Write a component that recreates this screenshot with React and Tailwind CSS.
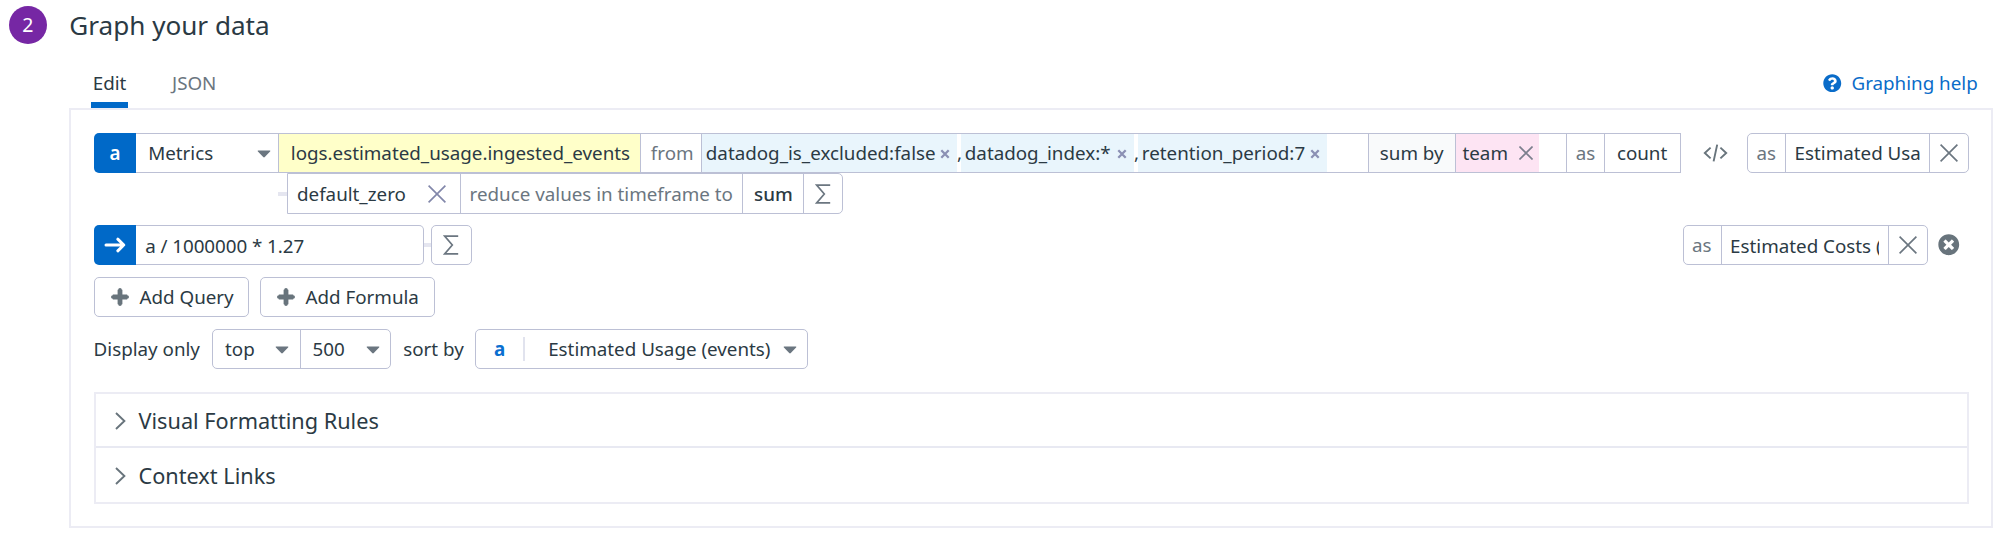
import { FaQuestionCircle, FaTimesCircle } from "react-icons/fa";

function Caret({ className }) {
  return (
    <svg className={`shrink-0 ${className || ""}`} width="14" height="8" viewBox="0 0 14 8">
      <path d="M1.3 .6h11.4c.6 0 .8.6.4 1L7.8 7c-.5.5-1.1.5-1.6 0L.9 1.6C.5 1.2.7.6 1.3.6z" fill="#6b7680" />
    </svg>
  );
}

function Cross({ size, stroke, className }) {
  return (
    <svg className={`shrink-0 ${className || ""}`} width={size} height={size} viewBox="0 0 18 18">
      <path d="M.6.6l16.8 16.8M17.4.6L.6 17.4" fill="none" stroke={stroke} strokeWidth={27 / size + 0.15} />
    </svg>
  );
}

function TagCross() {
  return (
    <svg className="mt-[1px] shrink-0" width="10" height="10" viewBox="0 0 10 10">
      <path d="M1.3 1.3l7.4 7.4M8.7 1.3L1.3 8.7" fill="none" stroke="#8b90b4" strokeWidth="2.3" />
    </svg>
  );
}

function Sigma() {
  return (
    <svg className="shrink-0" width="16" height="20" viewBox="0 0 16 20">
      <path d="M15.2 1.1H1.6L9.3 10 1.6 18.9h13.6" fill="none" stroke="#6b7680" strokeWidth="1.7" />
    </svg>
  );
}

function Plus() {
  return (
    <svg className="shrink-0" width="18" height="18" viewBox="0 0 18 18">
      <path d="M9 1.8v14.4M1.8 9h14.4" stroke="#68747c" strokeWidth="4.8" />
      <path d="M9 1.8v14.4M1.8 9h14.4" stroke="#68747c" strokeWidth="3.6" strokeLinecap="round" />
    </svg>
  );
}

function Chevron() {
  return (
    <svg className="shrink-0" width="11" height="18" viewBox="0 0 11 18">
      <path d="M1 1l8.4 8L1 17" fill="none" stroke="#68747c" strokeWidth="1.9" />
    </svg>
  );
}

function Section({ title, className }) {
  return (
    <div className={`flex items-center pt-[1px] pl-[19px] text-[21.7px] ${className}`}>
      <Chevron />
      <span className="ml-[12.5px]">{title}</span>
    </div>
  );
}

function Alias({ children, className, valueClass }) {
  return (
    <div className={`flex h-10 shrink-0 items-stretch rounded-[5px] border border-[#bcc0d5] ${className}`}>
      <div className="flex w-[38px] shrink-0 items-center border-r border-[#bcc0d5] pl-[8.5px] text-[#6b7680]">as</div>
      <div className={`flex shrink-0 items-center border-r border-[#bcc0d5] pl-[8.6px] ${valueClass}`}>
        <span className="grow overflow-hidden">{children}</span>
      </div>
      <div className="flex grow items-center justify-center">
        <Cross size={18} stroke="#6b7680" />
      </div>
    </div>
  );
}

export default function App() {
  return (
    <div className="h-[534px] w-[1999px] overflow-hidden bg-white font-['Noto_Sans',sans-serif] text-[18.8px] leading-[26px] whitespace-nowrap text-[#2b3a44]">
      <header className="flex h-[50px] items-center pl-[9px]">
        <div className="flex size-[37.5px] items-center justify-center rounded-full bg-[#7627a4] text-[19.5px] text-white">2</div>
        <h1 className="ml-[22.8px] text-[26.1px] leading-[36px]">Graph your data</h1>
      </header>

      <nav className="flex h-[58px] items-end pr-[21.3px] pl-[91px]">
        <div className="flex h-[40px] w-[37px] flex-col items-center justify-between border-b-[6px] border-[#0069c8] pt-[1.5px]">Edit</div>
        <div className="ml-[44px] h-[38.5px] text-[#6b7680]">JSON</div>
        <a className="ml-auto flex h-[38.5px] items-start text-[#0a6cc9]">
          <FaQuestionCircle className="mt-[4px] mr-[9.5px] size-[18.5px]" />
          <span>Graphing help</span>
        </a>
      </nav>

      <section className="ml-[69px] flex h-[420px] w-[1924px] flex-col border-2 border-[#ececf4] pt-[23px] pl-[23px]">
        <div className="flex h-10 shrink-0">
          <div className="flex w-[42px] shrink-0 items-center justify-center rounded-l-[5px] bg-[#0069c8] font-semibold text-white">a</div>
          <div className="flex shrink-0 border-y border-r border-[#bcc0d5]">
            <div className="flex w-[143px] items-center border-r border-[#bcc0d5] pr-[7.5px] pl-[12.2px]">
              <span className="grow">Metrics</span>
              <Caret className="mt-[1px]" />
            </div>
            <div className="flex w-[362px] items-center border-r border-[#bcc0d5] bg-[#ffffc9] pl-[11.8px]">logs.estimated_usage.ingested_events</div>
            <div className="flex w-[61px] items-center border-r border-[#bcc0d5] pl-[9.8px] text-[#6b7680]">from</div>
            <div className="flex w-[667px] border-r border-[#bcc0d5]">
              <div className="flex w-[255px] items-center justify-between bg-[#e9f5fc] pr-[7px] pl-[3.8px]">
                datadog_is_excluded:false
                <TagCross />
              </div>
              <div className="flex w-[4px] items-center">,</div>
              <div className="flex w-[173px] items-center justify-between bg-[#e9f5fc] pr-[7.5px] pl-[3.8px]">
                datadog_index:*
                <TagCross />
              </div>
              <div className="flex w-[4px] items-center">,</div>
              <div className="flex w-[189px] items-center justify-between bg-[#e9f5fc] pr-[7px] pl-[3.8px]">
                retention_period:7
                <TagCross />
              </div>
            </div>
            <div className="flex w-[87px] items-center border-r border-[#bcc0d5] bg-[#f9fafb] pl-[10.8px]">sum by</div>
            <div className="flex w-[111px] border-r border-[#bcc0d5]">
              <div className="flex w-[83px] items-center justify-between bg-[#fde4f3] pr-[6px] pl-[6.5px]">
                team
                <Cross size={14} stroke="#7b7f8d" className="-mt-[1px]" />
              </div>
            </div>
            <div className="flex w-[38px] items-center border-r border-[#bcc0d5] pl-[8.7px] text-[#6b7680]">as</div>
            <div className="flex w-[75px] items-center pl-[11.9px]">count</div>
          </div>
          <div className="flex w-[66px] shrink-0 items-center pl-[21.5px]">
            <svg width="25" height="18" viewBox="0 0 25 18">
              <path d="M7.6 3.6L1.8 9l5.8 5.4M17.4 3.6L23.2 9l-5.8 5.4M14.2.6l-3.6 16.8" fill="none" stroke="#68747c" strokeWidth="1.9" />
            </svg>
          </div>
          <Alias className="w-[222px]" valueClass="w-[144px] pr-[8px]">Estimated Usage (events)</Alias>
        </div>

        <div className="flex h-[41px] shrink-0 items-center pl-[184px]">
          <div className="h-[4px] w-[9px] bg-[#e5e6f0]" />
          <div className="flex h-[41px] rounded-r-[5px] border border-[#bcc0d5]">
            <div className="flex w-[173px] items-center justify-between border-r border-[#bcc0d5] pr-[14px] pl-[9px]">
              default_zero
              <Cross size={18} stroke="#8287aa" />
            </div>
            <div className="flex w-[282px] items-center border-r border-[#bcc0d5] pl-[8.6px] text-[#6b7680]">reduce values in timeframe to</div>
            <div className="flex w-[61px] items-center border-r border-[#bcc0d5] pl-[11px] font-medium">sum</div>
            <div className="flex w-[38px] items-center justify-center">
              <Sigma />
            </div>
          </div>
        </div>

        <div className="mt-[11px] flex h-10 shrink-0 items-center">
          <div className="flex h-10 w-[42px] items-center justify-center rounded-l-[5px] bg-[#0069c8]">
            <svg width="22" height="16" viewBox="0 0 22 16">
              <path d="M2 8h17.5M13.8 2.2L19.8 8l-6 5.8" fill="none" stroke="#fff" strokeWidth="3" strokeLinecap="round" strokeLinejoin="round" />
            </svg>
          </div>
          <div className="flex h-10 w-[288px] items-center rounded-r-[5px] border border-l-0 border-[#bcc0d5] pt-[1px] pl-[9.2px] tracking-[-0.05px]">a / 1000000 * 1.27</div>
          <div className="h-[4px] w-[7px] bg-[#e5e6f0]" />
          <div className="flex h-10 w-[41px] items-center justify-center rounded-[5px] border border-[#bcc0d5] pr-[1px]">
            <Sigma />
          </div>
          <Alias className="ml-[1210.5px] w-[245.5px]" valueClass="w-[167px] pt-[1px] pr-[8.5px]">Estimated Costs (USD)</Alias>
          <FaTimesCircle className="ml-[10px] size-[21.5px] shrink-0 text-[#68747c]" />
        </div>

        <div className="mt-3 flex h-10 shrink-0 gap-[11px]">
          <div className="flex w-[155px] items-center rounded-[5px] border border-[#bcc0d5] pl-4">
            <Plus />
            <span className="ml-[10.5px]">Add Query</span>
          </div>
          <div className="flex w-[175px] items-center rounded-[5px] border border-[#bcc0d5] pl-4">
            <Plus />
            <span className="ml-[10.5px]">Add Formula</span>
          </div>
        </div>

        <div className="mt-3 flex h-10 shrink-0 items-center">
          <span className="w-[118px] -indent-[0.4px]">Display only</span>
          <div className="flex h-10 w-[179px] rounded-[5px] border border-[#bcc0d5]">
            <div className="flex w-[88px] items-center justify-between border-r border-[#bcc0d5] pr-[11px] pl-[12px]">
              top
              <Caret className="mt-[1px]" />
            </div>
            <div className="flex grow items-center justify-between pr-[10.5px] pl-[11.5px]">
              500
              <Caret className="mt-[1px]" />
            </div>
          </div>
          <span className="ml-[12.2px] w-[71.8px]">sort by</span>
          <div className="flex h-10 w-[333px] items-center rounded-[5px] border border-[#bcc0d5] pl-[18px]">
            <span className="w-[29px] font-bold text-[#0a6fd0]">a</span>
            <div className="h-6 w-[2px] bg-[#e1e3ee]" />
            <span className="ml-[23.2px] w-[234.8px]">Estimated Usage (events)</span>
            <Caret className="mt-[1px]" />
          </div>
        </div>

        <div className="mt-[23px] flex h-[112px] w-[1875px] shrink-0 flex-col border-2 border-[#ececf4]">
          <Section title="Visual Formatting Rules" className="h-[54px] border-b-2 border-[#e8e9f2]" />
          <Section title="Context Links" className="h-[54px]" />
        </div>
      </section>
    </div>
  );
}
